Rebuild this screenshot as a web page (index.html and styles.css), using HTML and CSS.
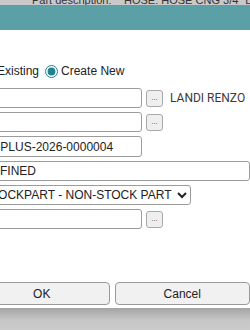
FILE: index.html
```html
<!DOCTYPE html>
<html lang="en">
<head>
    <meta charset="UTF-8">
    <meta name="viewport" content="width=device-width, initial-scale=1.0">
    <title>New Part</title>
    <link rel="stylesheet" href="styles.css">
</head>
<body>
    <div class="info-strip">
        <span class="info-label">Part description:</span>
        <span class="info-value">HOSE: HOSE CNG 3/4" LOW PRESSURE</span>
    </div>
    <div class="title-bar"></div>

    <div class="dialog">
        <form class="fields" id="part-form">
            <div class="radio-row">
                <label><input type="radio" name="mode" value="existing"> Existing</label>
                <label><input type="radio" name="mode" value="new" checked> Create New</label>
            </div>

            <div class="row">
                <input type="text" class="txt" name="maker">
                <button type="button" class="pick">...</button>
                <span class="maker-name">LANDI RENZO</span>
            </div>

            <div class="row">
                <input type="text" class="txt" name="model">
                <button type="button" class="pick">...</button>
            </div>

            <div class="row">
                <input type="text" class="txt txt-tall" name="part_no" value="LR-PLUS-2026-0000004">
            </div>

            <div class="row">
                <input type="text" class="txt txt-wide" name="status" value="UNDEFINED" readonly>
            </div>

            <div class="row">
                <select class="sel" name="part_type">
                    <option>STOCKPART - NON-STOCK PART</option>
                    <option>STOCKPART - STOCK PART</option>
                </select>
            </div>

            <div class="row">
                <input type="text" class="txt" name="location">
                <button type="button" class="pick">...</button>
            </div>
        </form>

        <div class="actions">
            <button type="submit" form="part-form" class="btn">OK</button>
            <button type="button" class="btn">Cancel</button>
        </div>
    </div>

    <div class="footer-bar"></div>
</body>
</html>
```

FILE: styles.css
```css
html, body {
    overflow: hidden;
}

body {
    font-family: 'Liberation Sans', Arial, sans-serif;
    font-size: 12px;
    color: #222;
    background-color: #fff;
    margin: 0;
    padding: 0;
    width: 250px;
    height: 330px;
}

/* strip from the page behind the dialog */
.info-strip {
    height: 5px;
    overflow: hidden;
    background-color: #c9c9c9;
    display: flex;
    font-size: 11px;
    line-height: 13px;
    color: #333;
    white-space: nowrap;
}

.info-label {
    flex-shrink: 0;
    margin-top: -6px;
    margin-left: 32px;
    width: 92px;
}

.info-value {
    flex-shrink: 0;
    margin-top: -6px;
}

.title-bar {
    height: 25px;
    background-color: #5ba0a7;
}

.dialog {
    margin-left: -22px;
    padding-top: 32px;
}

.fields {
    display: flex;
    flex-direction: column;
    gap: 4px;
    margin: 0;
}

.radio-row {
    display: flex;
    align-items: center;
    gap: 6px;
    height: 18px;
    padding-left: 3px;
    margin-bottom: 4px;
}

.radio-row label {
    display: flex;
    align-items: center;
}

.radio-row input[type="radio"] {
    margin: 0 3px 0 0;
    width: 13px;
    height: 13px;
    accent-color: #23828c;
}

.row {
    display: flex;
    align-items: center;
}

.txt {
    box-sizing: border-box;
    width: 164px;
    height: 20px;
    padding: 0 2px;
    border: 1px solid #9c9c9c;
    border-radius: 3px;
    font-family: 'Liberation Sans', Arial, sans-serif;
    font-size: 12px;
    color: #222;
    background-color: #fff;
}

.txt-tall {
    height: 21px;
}

.txt-wide {
    width: 320px;
    margin-left: -15px;
}

.pick {
    box-sizing: border-box;
    width: 17px;
    height: 17px;
    margin-left: 4px;
    padding: 0;
    border: 1px solid #a8a8a8;
    border-radius: 3px;
    background-color: #efefef;
    color: #555;
    font-size: 8px;
    line-height: 12px;
}

.maker-name {
    margin-left: 7px;
    font-family: Roboto, sans-serif;
    font-size: 12px;
    color: #3a3a3a;
}

.sel {
    box-sizing: border-box;
    width: 213px;
    height: 20px;
    border: 1px solid #9c9c9c;
    border-radius: 3px;
    background-color: #fff;
    font-family: 'Liberation Sans', Arial, sans-serif;
    font-size: 12px;
    color: #222;
}

.actions {
    display: flex;
    gap: 5px;
    margin-top: 53px;
    margin-left: -4px;
}

.btn {
    box-sizing: border-box;
    width: 150px;
    height: 23px;
    border: 1px solid #9a9a9a;
    border-radius: 4px;
    background-color: #f1f1f1;
    font-family: 'Liberation Sans', Arial, sans-serif;
    font-size: 12px;
    color: #222;
}

.footer-bar {
    margin-top: 3px;
    height: 30px;
    background: linear-gradient(#a4a4a4, #c6c6c6 40%, #cfcfcf);
}
```
